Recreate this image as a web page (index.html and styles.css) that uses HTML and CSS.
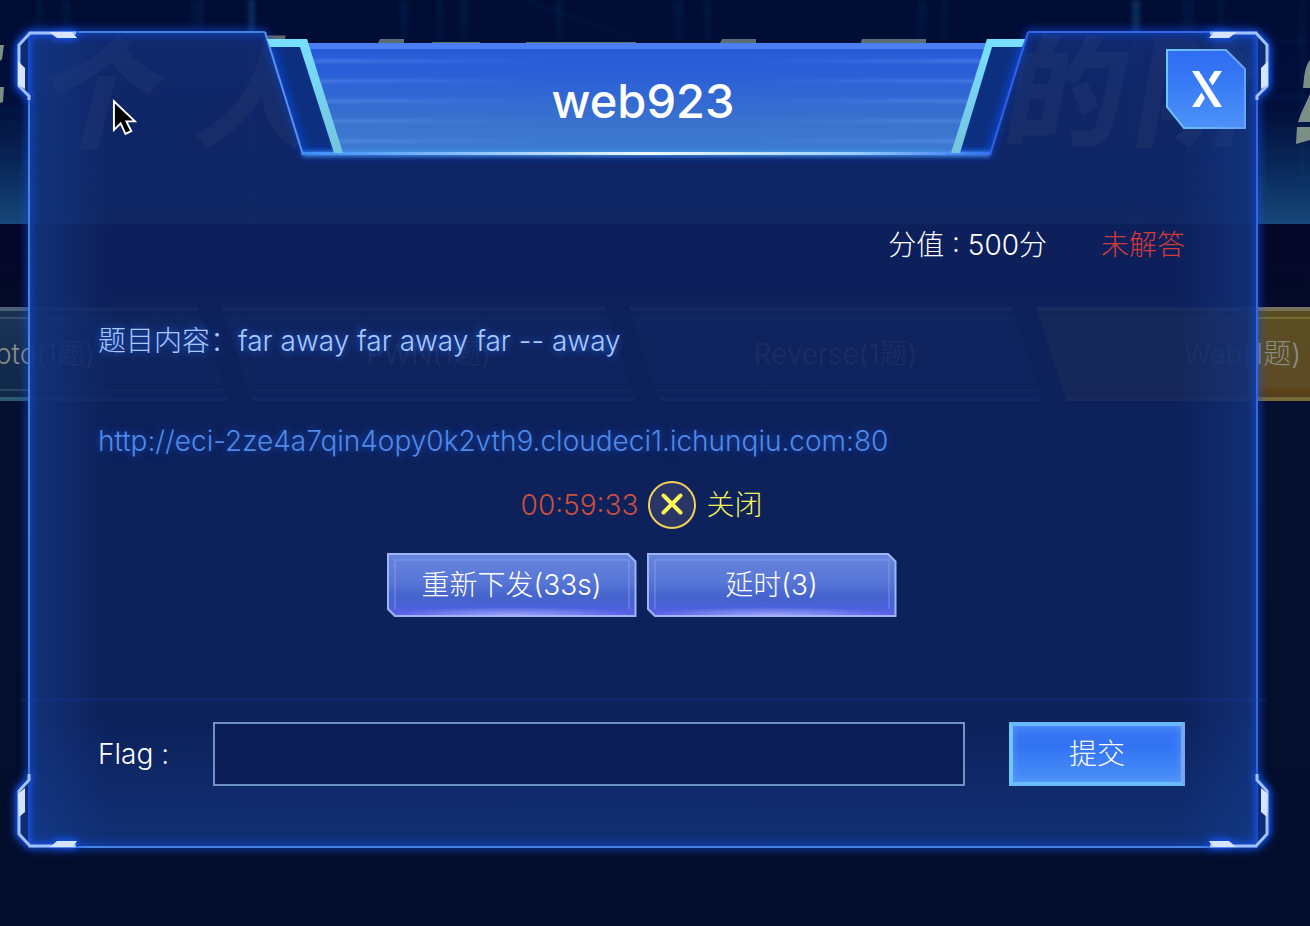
FILE: index.html
```html
<!DOCTYPE html>
<html lang="zh-CN">
<head>
<meta charset="utf-8">
<meta name="viewport" content="width=device-width, initial-scale=1">
<title>web923</title>
<link rel="stylesheet" href="styles.css">
</head>
<body>
<div class="stage">
  <div class="scene">
    <div class="hero">
      <svg class="hero-art" viewBox="0 0 1310 224" preserveAspectRatio="xMidYMid slice" aria-hidden="true">
        <defs>
          <filter id="soft"><feGaussianBlur stdDeviation="2"/></filter>
          <linearGradient id="beam" x1="0" y1="0" x2="0" y2="1">
            <stop offset="0" stop-color="#1f5c96" stop-opacity=".4"/>
            <stop offset="1" stop-color="#1f5c96" stop-opacity=".2"/>
          </linearGradient>
        </defs>
        <g filter="url(#soft)" fill="url(#beam)">
          <rect x="248" y="0" width="7" height="224"/>
          <rect x="1132" y="0" width="8" height="224"/>
          <g opacity=".4">
            <rect x="36" y="0" width="6" height="34"/><rect x="62" y="0" width="8" height="34"/>
            <rect x="192" y="0" width="12" height="34"/><rect x="400" y="0" width="8" height="40"/>
            <rect x="436" y="0" width="6" height="40"/><rect x="460" y="0" width="8" height="40"/>
            <rect x="556" y="0" width="7" height="40"/><rect x="674" y="0" width="9" height="40"/>
            <rect x="704" y="0" width="7" height="40"/><rect x="918" y="0" width="8" height="40"/>
            <rect x="942" y="0" width="6" height="40"/><rect x="1182" y="0" width="12" height="34"/>
            <rect x="1218" y="0" width="6" height="34"/><rect x="1262" y="96" width="48" height="3"/>
            <rect x="0" y="108" width="26" height="5"/><rect x="1278" y="40" width="32" height="3"/>
            <rect x="0" y="122" width="20" height="4"/><rect x="1300" y="0" width="4" height="224"/>
            <path d="M530 0l110 40h-6L520 0z"/>
          </g>
        </g>
        <g fill="#7c8f86">
          <path opacity=".75" d="M380 39h24v6h-27zM432 42h48v4h-48zM526 42h110v4H526zM722 39h34v6h-37zM862 39h64v6h-66z"/>
          <path d="M0 45l4 0-2 14-2 2zM0 87h4l-1 15-3 1z"/>
          <path d="M1310 60c-3 3-5 10-6 18l-1 10h7zM1310 94c-4 9-8 16-12 28h12zM1297 127h13v13l-14 4z"/>
        </g>
        <g class="hero-text">
          <text transform="translate(32 138) skewX(-14)">个</text>
          <text transform="translate(192 138) skewX(-14)">人</text>
          <text transform="translate(1000 136) skewX(-10)">的</text>
          <text transform="translate(1130 136) skewX(-10)">阶</text>
        </g>
      </svg>
    </div>
    <nav class="tabs">
      <button class="tab" type="button">Crypto(1题)</button>
      <button class="tab" type="button">PWN(1题)</button>
      <button class="tab" type="button">Reverse(1题)</button>
      <button class="tab tab-active" type="button">Web(1题)</button>
    </nav>
  </div>

  <main class="dialog" role="dialog" aria-labelledby="title">
    <div class="fill"></div>
    <span class="edge edge-left"></span>
    <span class="edge edge-right"></span>
    <span class="edge edge-bottom"></span>
    <span class="edge edge-top-left"></span>
    <span class="edge edge-top-right"></span>
    <span class="rule"></span>

    <svg class="corner corner-tl" viewBox="8 22 80 80" aria-hidden="true">
      <path class="corner-fill" d="M28 33L19 45v41l9 10z"/>
      <path class="corner-line" d="M76 33H30L19 45v41l10 10v4"/>
      <path class="corner-bit" d="M49 32h23l5 6H57zM18 61l7 7v21l-7-4z"/>
    </svg>
    <svg class="corner corner-tr" viewBox="8 22 80 80" aria-hidden="true">
      <path class="corner-fill" d="M28 33L19 45v41l9 10z"/>
      <path class="corner-line" d="M76 33H30L19 45v41l10 10v4"/>
      <path class="corner-bit" d="M49 32h23l5 6H57zM18 61l7 7v21l-7-4z"/>
    </svg>
    <svg class="corner corner-bl" viewBox="8 777 80 80" aria-hidden="true">
      <path class="corner-fill" d="M28 780l-9 12v42l9 12z"/>
      <path class="corner-line" d="M29 774v6l-10 11v43l11 12h46"/>
      <path class="corner-bit" d="M18 794l7-6v24l-6 5zM50 847l7-6h20l-4 6z"/>
    </svg>
    <svg class="corner corner-br" viewBox="8 777 80 80" aria-hidden="true">
      <path class="corner-fill" d="M28 780l-9 12v42l9 12z"/>
      <path class="corner-line" d="M29 774v6l-10 11v43l11 12h46"/>
      <path class="corner-bit" d="M18 794l7-6v24l-6 5zM50 847l7-6h20l-4 6z"/>
    </svg>

    <header class="head">
      <svg class="banner" viewBox="253 22 780 150" aria-hidden="true">
        <defs>
          <linearGradient id="bannerFill" x1="0" y1="0" x2="0" y2="1">
            <stop offset="0" stop-color="#265ad9"/><stop offset=".3" stop-color="#2b60d8"/>
            <stop offset=".75" stop-color="#3b74cd"/><stop offset="1" stop-color="#3d7bd2"/>
          </linearGradient>
          <linearGradient id="cyan" x1="0" y1="0" x2="0" y2="1">
            <stop offset="0" stop-color="#78e0ff"/><stop offset="1" stop-color="#74c4de"/>
          </linearGradient>
          <linearGradient id="streak" gradientUnits="userSpaceOnUse" x1="307" y1="0" x2="987" y2="0">
            <stop offset="0" stop-color="#7aa8ff" stop-opacity=".3"/><stop offset=".35" stop-color="#7aa8ff" stop-opacity="0"/>
            <stop offset=".65" stop-color="#7aa8ff" stop-opacity="0"/><stop offset="1" stop-color="#7aa8ff" stop-opacity=".3"/>
          </linearGradient>
          <linearGradient id="base" gradientUnits="userSpaceOnUse" x1="303" y1="0" x2="991" y2="0">
            <stop offset="0" stop-color="#3b8cf5"/><stop offset=".25" stop-color="#8fc4ff"/>
            <stop offset=".5" stop-color="#f0fbff"/><stop offset=".8" stop-color="#9ad0ff"/><stop offset="1" stop-color="#2f6ff0"/>
          </linearGradient>
          <clipPath id="wings"><path d="M265 39h42l36 115h-40zM1028 39h-41l-36 115h39z"/></clipPath>
          <filter id="glow" x="-10%" y="-40%" width="120%" height="180%"><feGaussianBlur stdDeviation="4"/></filter>
          <filter id="lineGlow" filterUnits="userSpaceOnUse" x="253" y="130" width="780" height="42"><feGaussianBlur stdDeviation="2"/></filter>
          <filter id="streakBlur" filterUnits="userSpaceOnUse" x="300" y="40" width="700" height="120"><feGaussianBlur stdDeviation="0 1"/></filter>
        </defs>
        <path d="M265 32l38 122h687l38-122" fill="none" stroke="#1450e0" stroke-width="4" opacity=".7" filter="url(#glow)"/>
        <g clip-path="url(#wings)">
          <path d="M260 30h90v130h-90zM940 30h95v130h-95z" fill="#0d2f80"/>
          <path d="M265 32l38 123h40L304 32M1028 32l-38 123h-39l37-123" fill="none" stroke="#0c48d8" stroke-width="7" filter="url(#glow)"/>
        </g>
        <path d="M307 43h680l-35 111H342z" fill="url(#bannerFill)"/>
        <path d="M307 43h680l-2 6H309z" fill="#4b80f4"/>
        <path d="M314 59h666v4H314zM321 79h652v4H321zM327 99h640v4H327zM333 119h628v4H333zM339 139h616v4H339z" fill="url(#streak)" filter="url(#streakBlur)"/>
        <path d="M303 154h687" stroke="#4aa0ff" stroke-width="4" fill="none" filter="url(#lineGlow)"/>
        <path d="M303 152h688v3H303z" fill="url(#base)"/>
        <path d="M265 32l38 123" stroke="#5692ee" stroke-width="2" fill="none"/>
        <path d="M1028 32l-38 123" stroke="#2f62e6" stroke-width="2" fill="none"/>
        <path d="M267 39h40l36 114h-9L300 47h-30zM987 39h38l-3 8h-30l-32 106h-9z" fill="url(#cyan)"/>
      </svg>
      <h1 class="title" id="title">web923</h1>
      <button class="close" type="button" aria-label="X">
        <svg viewBox="0 0 80 80" aria-hidden="true">
          <defs><linearGradient id="closeFill" x1="0" y1="0" x2="0" y2="1">
            <stop offset="0" stop-color="#2f6cf3"/><stop offset=".3" stop-color="#3576f4"/><stop offset="1" stop-color="#4c92f8"/>
          </linearGradient>
          <linearGradient id="closeEdge" x1="0" y1="0" x2="1" y2="0">
            <stop offset="0" stop-color="#6cc4fa"/><stop offset="1" stop-color="#6aa2f5"/>
          </linearGradient></defs>
          <path d="M1 1h59l19 19v59H18L1 58z" fill="url(#closeFill)" stroke="url(#closeEdge)" stroke-width="2"/>
          <path d="M26 22h7l23 36h-7.500zM48.500 22h7.500l-9.500 14.500-3.700-5.500zM35.500 43.500l3.500 5.500-5.500 9H26z" fill="#fff"/>
        </svg>
      </button>
    </header>

    <div class="content">
      <div class="meta">
        <span>分值 : 500分</span>
        <span class="status">未解答</span>
      </div>
      <p class="desc">题目内容：far away far away far -- away</p>
      <p class="target"><a href="http://eci-2ze4a7qin4opy0k2vth9.cloudeci1.ichunqiu.com:80">http://eci-2ze4a7qin4opy0k2vth9.cloudeci1.ichunqiu.com:80</a></p>
      <div class="timer">
        <time class="clock">00:59:33</time>
        <button class="stop" type="button">
          <svg viewBox="0 0 48 48" aria-hidden="true">
            <circle cx="24" cy="24" r="23" fill="#283566" stroke="#f0cf5c" stroke-width="2"/>
            <path d="M15.500 14.500l17 17M32.500 14.500l-17 17" stroke="#fdfa5a" stroke-width="4" stroke-linecap="round"/>
          </svg>
          <span>关闭</span>
        </button>
      </div>
      <div class="actions">
        <button class="action" type="button"><span>重新下发(33s)</span></button>
        <button class="action" type="button"><span>延时(3)</span></button>
      </div>
      <form class="flag">
        <label for="flag">Flag :</label>
        <input id="flag" type="text" autocomplete="off">
        <button class="submit" type="button">提交</button>
      </form>
    </div>
  </main>

  <svg class="cursor" viewBox="0 0 26 40" aria-hidden="true">
    <path d="M2 2v30l7-7 5 11 6-3-5-10h9z" fill="#000" stroke="#fff" stroke-width="2"/>
  </svg>
</div>
</body>
</html>
```
FILE: styles.css
```css
* { box-sizing: border-box; }

body {
  margin: 0;
  background: #040d2c;
  font-family: Inter, "Noto Sans CJK SC", sans-serif;
  font-size: 28px;
  font-weight: 300;
  line-height: 40px;
  color: #fff;
}

button, input {
  font: inherit;
  color: inherit;
}

button {
  padding: 0;
  border: 0;
  background: none;
  cursor: pointer;
}

h1, p { margin: 0; }

.stage {
  position: relative;
  min-height: 100vh;
  padding: 31px 52px 78px 28px;
  overflow: hidden;
}

/* Page behind the dialog */
.scene {
  position: absolute;
  inset: 0;
  background: linear-gradient(#05062a 224px, #040a28 310px, #051030 420px, #030d2b 100%);
}

.hero {
  height: 224px;
  background: linear-gradient(#000c32 0, #020f3c 110px, #0a2a5c 170px, #174779 224px);
}

.hero-art {
  display: block;
  width: 100%;
  height: 100%;
}

.hero-text {
  fill: #7c8278;
  fill-opacity: .8;
  font-family: "Noto Sans CJK SC", sans-serif;
  font-size: 120px;
  font-weight: 900;
}

.tabs {
  display: flex;
  margin: 83px 0 0 -185px;
}

.tab {
  position: relative;
  flex: 0 0 413px;
  height: 94px;
  margin-right: -6px;
  color: #8b8b86;
  background: linear-gradient(#4a6076 0 4px, #1b3154 4px 10px, #3a5068 10px 12px, #1b3358 12px, #0f2748 82px, #29465e 82px 84px, #0f2748 84px 90px, #2d5a72 90px);
  clip-path: polygon(0 0, 383px 0, 100% 100%, 30px 100%);
}

.tab-active {
  background: linear-gradient(#77705a 0 4px, #584e22 4px 10px, #7a6d34 10px 12px, #5b4e24 12px, #5c4a24 80px, #604018 84px, #4e3f20 90px, #776a38 90px);
}

/* Dialog shell */
.dialog {
  position: relative;
  min-height: 817px;
}

.fill {
  position: absolute;
  inset: 0;
  background:
    linear-gradient(90deg, rgba(22, 66, 150, .5), rgba(22, 66, 150, 0) 80px),
    linear-gradient(270deg, rgba(22, 66, 150, .45), rgba(22, 66, 150, 0) 80px),
    linear-gradient(0deg, rgba(22, 66, 150, .45), rgba(22, 66, 150, 0) 130px),
    linear-gradient(180deg, rgba(22, 60, 150, .3), rgba(22, 60, 150, 0) 200px),
    rgba(14, 35, 97, .9);
  clip-path: polygon(0 0, calc(50% - 378px) 0, calc(50% - 340px) 124px, calc(50% + 347px) 124px, calc(50% + 385px) 0, 100% 0, 100% 100%, 0 100%);
}

.edge {
  position: absolute;
  background: #4683e0;
  box-shadow: 0 0 8px 1px #1450e0;
}

.edge-left { left: 0; top: 68px; bottom: 70px; width: 2px; }
.edge-right { right: 0; top: 68px; bottom: 70px; width: 2px; background: #3566e8; }
.edge-bottom { left: 45px; right: 45px; bottom: 0; height: 2px; }
.edge-top-left { left: 45px; right: calc(50% + 378px); top: 0; height: 2px; }
.edge-top-right { left: calc(50% + 385px); right: 45px; top: 0; height: 2px; background: #3566e8; }

.rule {
  position: absolute;
  left: -8px;
  right: -8px;
  top: 667px;
  height: 3px;
  background: rgba(27, 67, 170, .18);
}

.corner {
  position: absolute;
  width: 80px;
  height: 80px;
  overflow: visible;
  filter: drop-shadow(0 0 3px #1a58ff) drop-shadow(0 0 5px #1450e0);
}

.corner-tl { left: -20px; top: -9px; }
.corner-tr { right: -20px; top: -9px; transform: scaleX(-1); }
.corner-bl { left: -20px; bottom: -9px; }
.corner-br { right: -20px; bottom: -9px; transform: scaleX(-1); }
.corner-fill { fill: #102c74; }
.corner-line { fill: none; stroke: #a0c2ff; stroke-width: 3; }
.corner-bit { fill: #d6e5ff; }

.head {
  position: relative;
  display: flex;
  justify-content: center;
  height: 124px;
}

.banner {
  position: absolute;
  left: calc(50% - 390px);
  top: -9px;
  width: 780px;
  height: 150px;
}

.title {
  position: relative;
  padding-top: 40px;
  font-size: 47px;
  font-weight: 500;
  line-height: 60px;
}

.close {
  position: absolute;
  right: 12px;
  top: 18px;
  width: 80px;
  height: 80px;
}

.close svg { display: block; }

/* Dialog content */
.content {
  position: relative;
  padding: 70px 73px 62px 70px;
}

.meta {
  display: flex;
  justify-content: flex-end;
  gap: 54px;
}

.status { color: #d23a3a; }

.desc {
  margin-top: 56px;
  color: #a9c8ff;
  text-shadow: 0 0 8px #2a6cf0;
}

.target {
  margin-top: 60px;
  overflow-wrap: anywhere;
}

.target a {
  color: #4f8ae8;
  text-decoration: none;
  text-shadow: 0 0 8px #1c50c0;
}

.timer {
  display: flex;
  justify-content: center;
  align-items: center;
  gap: 10px;
  margin-top: 20px;
}

.clock { color: #c9503f; }

.stop {
  display: flex;
  align-items: center;
  gap: 10px;
  color: #f6f65c;
}

.stop svg {
  width: 48px;
  height: 48px;
}

.actions {
  display: flex;
  justify-content: center;
  gap: 10px;
  margin-top: 24px;
}

.action {
  position: relative;
  width: 250px;
  height: 64px;
  background: #9db4f6;
  clip-path: polygon(0 0, calc(100% - 8px) 0, 100% 8px, 100% 100%, 8px 100%, 0 calc(100% - 8px));
}

.action::before {
  content: "";
  position: absolute;
  inset: 2px;
  background:
    radial-gradient(ellipse 50% 8px at 50% 100%, rgba(169, 180, 255, .8), rgba(169, 180, 255, 0)),
    linear-gradient(#6684dc, #5876d6 45%, #4463cc 70%, #4a62d8 84%, #5a5fe6);
  clip-path: polygon(0 0, calc(100% - 7px) 0, 100% 7px, 100% 100%, 7px 100%, 0 calc(100% - 7px));
}

.action::after {
  content: "";
  position: absolute;
  inset: 6px 7px 8px;
  border: 2px solid rgba(140, 170, 245, .35);
  border-bottom: 0;
}

.action span {
  position: relative;
  z-index: 1;
}

.flag {
  display: flex;
  align-items: center;
  margin-top: 105px;
}

.flag label { flex: 0 0 115px; }

.flag input {
  flex: 1 1 0;
  min-width: 0;
  height: 64px;
  margin-right: 44px;
  padding: 0 16px;
  border: 2px solid #6f93c4;
  border-radius: 0;
  background: #0a1d56;
  outline: none;
}

.submit {
  flex: 0 0 176px;
  height: 64px;
  border: 4px solid;
  border-color: #66b8f8 #76a6f4 #68bcf8 #6cc8f8;
  background: linear-gradient(#3a78f4, #3273f5 35%, #4a8ff7);
  box-shadow: inset 0 0 8px rgba(110, 170, 250, .6);
}

.cursor {
  position: absolute;
  left: 112px;
  top: 99px;
  width: 25px;
  height: 39px;
}
```
